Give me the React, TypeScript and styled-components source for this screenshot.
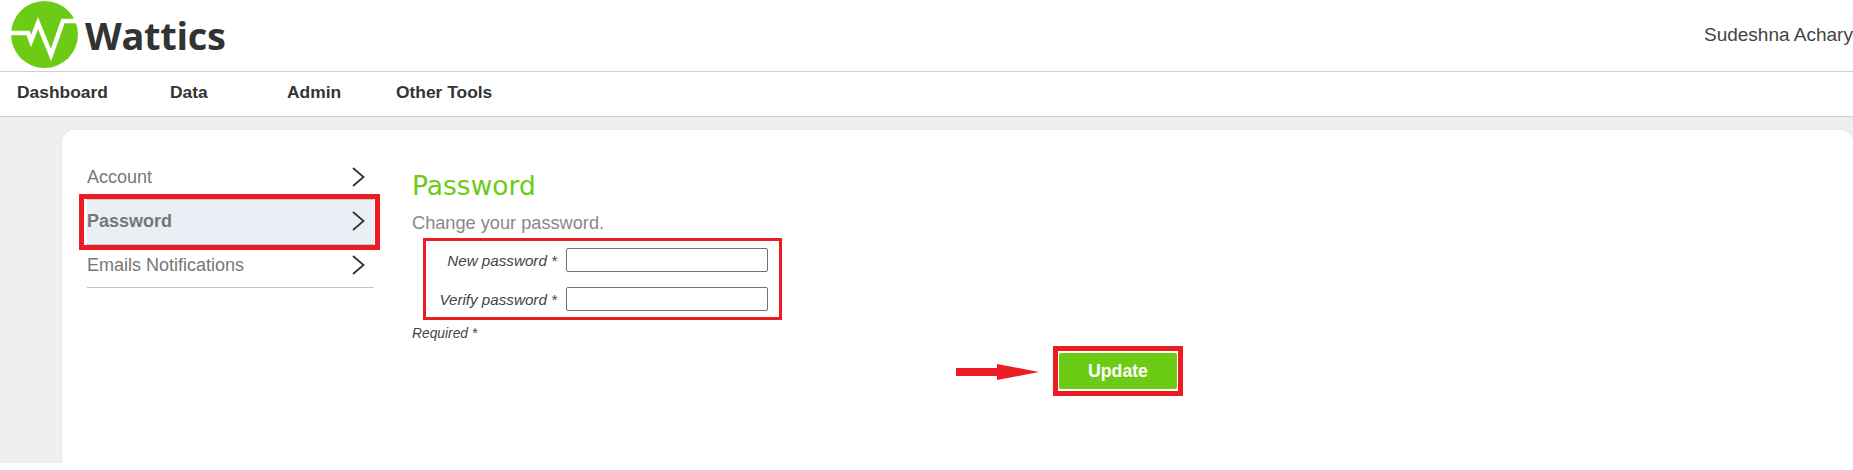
import styled, { createGlobalStyle } from "styled-components";

const GREEN = "#6ccb14";
const RED = "#ed1c24";

const GlobalStyle = createGlobalStyle`
  html, body {
    margin: 0;
    padding: 0;
    background: #fff;
    font-family: "Liberation Sans", Arial, sans-serif;
  }
  * {
    box-sizing: border-box;
  }
`;

const Page = styled.div`
  width: 1853px;
  height: 470px;
  overflow: hidden;
  display: flex;
  flex-direction: column;
  background: #fff;
`;

const Header = styled.header`
  height: 72px;
  flex: none;
  display: flex;
  align-items: flex-start;
  justify-content: space-between;
  background: #fff;
  border-bottom: 1px solid #cfcfcf;
  overflow: hidden;
`;

const Logo = styled.div`
  display: flex;
  align-items: center;
  gap: 7px;
  padding: 1px 0 0 11px;
`;

const LogoWord = styled.span`
  font-family: "Open Sans", sans-serif;
  font-weight: 700;
  font-size: 38px;
  line-height: 66px;
  letter-spacing: -0.3px;
  color: #333;
`;

const UserName = styled.span`
  margin-top: 25px;
  margin-right: -10.5px;
  font-size: 19px;
  line-height: 20px;
  color: #444;
  white-space: nowrap;
`;

const Nav = styled.nav`
  height: 45px;
  flex: none;
  display: flex;
  align-items: center;
  background: #fff;
  border-bottom: 1px solid #cfcfcf;
  padding: 0 0 3px 17px;
`;

const NavItem = styled.span<{ $width: number }>`
  width: ${(p) => p.$width}px;
  font-size: 17.4px;
  font-weight: 700;
  color: #333;
  white-space: nowrap;
`;

const Main = styled.main`
  height: 346px;
  flex: none;
  padding: 13px 0 0 62px;
  display: flex;
  background: #efefef;
`;

const Card = styled.div`
  flex: 1;
  display: flex;
  background: #fff;
  border-radius: 12px 12px 0 0;
  box-shadow: -1px 0 0 #e6e6e6, 0 -1px 0 #e6e6e6;
  padding: 25px 0 0 25px;
`;

const SideMenu = styled.ul`
  width: 287px;
  flex: none;
  margin: 0;
  padding: 0;
  list-style: none;
`;

const MenuRow = styled.li<{ $active?: boolean; $last?: boolean }>`
  height: ${(p) => (p.$active ? 46 : p.$last ? 43 : 44)}px;
  display: flex;
  align-items: center;
  justify-content: space-between;
  padding-right: 9px;
  padding-bottom: ${(p) => (p.$active ? 2 : p.$last ? 2 : 0)}px;
  font-size: 18px;
  color: #777;
  font-weight: ${(p) => (p.$active ? 700 : 400)};
  position: relative;
  background: ${(p) => (p.$active ? "#eaeff6" : "transparent")};
  border-top: ${(p) => (p.$active ? "1px solid #c4c4c4" : "none")};
  border-bottom: ${(p) => (p.$active || p.$last ? "1px solid #c4c4c4" : "none")};

  ${(p) =>
    p.$active &&
    `&::after {
      content: "";
      position: absolute;
      inset: -6px -6px -6px -8px;
      border: 5px solid ${RED};
      pointer-events: none;
    }`}
`;

const Content = styled.section`
  width: 1000px;
  padding: 0 0 0 38px;
  display: flex;
  flex-direction: column;
`;

const Title = styled.h1`
  margin: 15px 0 0;
  font-family: "DejaVu Sans", sans-serif;
  font-weight: 400;
  font-size: 26.5px;
  line-height: 32px;
  color: ${GREEN};
`;

const Subtitle = styled.p`
  margin: 11px 0 0;
  font-size: 18.2px;
  line-height: 20px;
  color: #888;
`;

const FieldsBox = styled.div`
  margin: 5px 0 0 11px;
  width: 359px;
  height: 82px;
  border: 3px solid ${RED};
  display: flex;
  flex-direction: column;
  gap: 15px;
  padding-top: 7px;
`;

const FieldRow = styled.div`
  display: flex;
  align-items: center;
  justify-content: flex-end;
  gap: 9px;
  padding-right: 11px;
`;

const FieldLabel = styled.label`
  font-size: 15.2px;
  font-style: italic;
  color: #444;
  white-space: nowrap;
`;

const FieldInput = styled.input`
  width: 202px;
  height: 24px;
  flex: none;
  border: 1px solid #707070;
  border-radius: 2px;
  background: #fff;
  padding: 0 4px;
`;

const RequiredNote = styled.div`
  margin-top: 6px;
  font-size: 13.8px;
  line-height: 16px;
  font-style: italic;
  color: #444;
`;

const ActionRow = styled.div`
  display: flex;
  align-items: center;
  justify-content: flex-end;
  width: 771px;
  margin-top: 4px;
  gap: 14px;
`;

const UpdateFrame = styled.div`
  border: 5px solid ${RED};
  padding: 2px 1px;
  width: 130px;
  height: 50px;
`;

const UpdateButton = styled.button`
  width: 100%;
  height: 100%;
  border: none;
  border-radius: 2px;
  background: ${GREEN};
  color: #fff;
  font-family: inherit;
  font-size: 17.7px;
  font-weight: 700;
`;

const Chevron = () => (
  <svg width="13" height="20" viewBox="0 0 13 20" fill="none">
    <path d="M1 1 L11.5 10 L1 19" stroke="#333" strokeWidth="1.8" />
  </svg>
);

const ArrowMark = () => (
  <svg width="83" height="20" viewBox="0 0 83 20">
    <path d="M0 7H41V3L83 11 41 19V15H0Z" fill={RED} />
  </svg>
);

const LogoMark = () => (
  <svg width="67" height="67" viewBox="0 0 67 67">
    <circle cx="33.5" cy="33.5" r="33.5" fill={GREEN} />
    <path
      d="M0 32H17L20 40 27 22 40 54 52 20H65"
      fill="none"
      stroke="#fff"
      strokeWidth="4.5"
      strokeLinejoin="miter"
    />
  </svg>
);

export default function App() {
  return (
    <>
      <GlobalStyle />
      <Page>
        <Header>
          <Logo>
            <LogoMark />
            <LogoWord>Wattics</LogoWord>
          </Logo>
          <UserName>Sudeshna Acharya</UserName>
        </Header>
        <Nav>
          <NavItem $width={153}>Dashboard</NavItem>
          <NavItem $width={117}>Data</NavItem>
          <NavItem $width={109}>Admin</NavItem>
          <NavItem $width={120}>Other Tools</NavItem>
        </Nav>
        <Main>
          <Card>
            <SideMenu>
              <MenuRow>
                Account
                <Chevron />
              </MenuRow>
              <MenuRow $active>
                Password
                <Chevron />
              </MenuRow>
              <MenuRow $last>
                Emails Notifications
                <Chevron />
              </MenuRow>
            </SideMenu>
            <Content>
              <Title>Password</Title>
              <Subtitle>Change your password.</Subtitle>
              <FieldsBox>
                <FieldRow>
                  <FieldLabel>New password *</FieldLabel>
                  <FieldInput type="password" />
                </FieldRow>
                <FieldRow>
                  <FieldLabel>Verify password *</FieldLabel>
                  <FieldInput type="password" />
                </FieldRow>
              </FieldsBox>
              <RequiredNote>Required *</RequiredNote>
              <ActionRow>
                <ArrowMark />
                <UpdateFrame>
                  <UpdateButton>Update</UpdateButton>
                </UpdateFrame>
              </ActionRow>
            </Content>
          </Card>
        </Main>
      </Page>
    </>
  );
}
